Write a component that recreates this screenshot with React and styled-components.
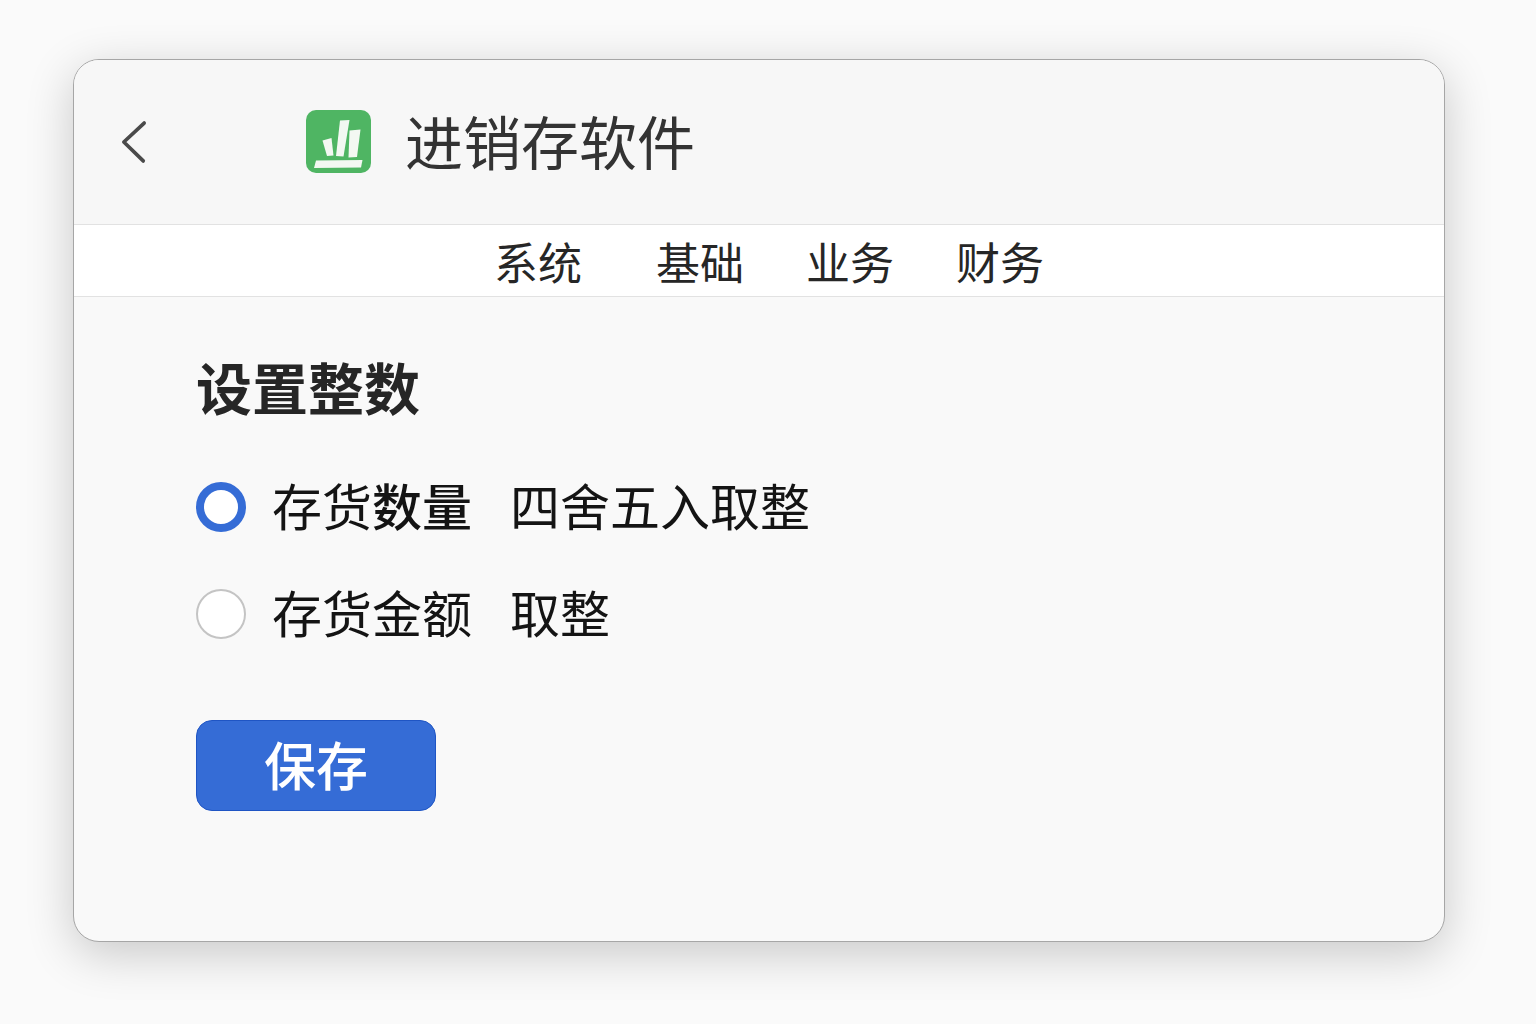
import React from 'react';
import styled, { createGlobalStyle } from 'styled-components';

const COLORS = {
  page: '#fafafa',
  card: '#f9f9f9',
  header: '#f7f7f7',
  white: '#ffffff',
  line: '#e2e2e2',
  edge: '#a6a6a6',
  ink: '#262626',
  title: '#333333',
  label: '#141414',
  primary: '#356cd6',
  primaryEdge: '#1f55c4',
  brand: '#4fb563',
};

const TABS = ['系统', '基础', '业务', '财务'];

const OPTIONS = [
  { id: 'quantity', subject: '存货', field: '数量', weight: 500, method: '四舍五入取整' },
  { id: 'amount', subject: '存货', field: '金额', weight: 400, method: '取整' },
];

const Logo = () => (
  <LogoImage viewBox="0 0 66 64" aria-hidden="true">
    <rect x="0" y="0" width="65" height="63" rx="10" fill={COLORS.brand} />
    <g fill="#f3f8f2">
      <path d="M16.5 30.5 L25.5 28 L27.5 45.5 L21 46 Z" />
      <path d="M34 10.5 L43.5 10 L37.5 46.5 L30 46 Z" />
      <path d="M43.5 20.5 L54.5 19.5 L51 47 L42.5 47.5 Z" />
      <path d="M10 50.5 L56.5 50 L55 57.5 L8 58 Z" />
    </g>
  </LogoImage>
);

const App = () => {
  const [selected, setSelected] = React.useState('quantity');

  return (
    <>
      <GlobalStyle />
      <Page>
        <Card>
          <Header>
            <BackButton type="button" aria-label="返回">
              <BackIcon viewBox="0 0 26 44" aria-hidden="true">
                <path d="M24 1.5 L2 22 L23 42.5" />
              </BackIcon>
            </BackButton>
            <Brand>
              <Logo />
              <Title>进销存软件</Title>
            </Brand>
          </Header>
          <Nav>
            {TABS.map((tab) => (
              <Tab key={tab} href="#">{tab}</Tab>
            ))}
          </Nav>
          <Form onSubmit={(event) => event.preventDefault()}>
            <Heading>设置整数</Heading>
            <Options>
              {OPTIONS.map(({ id, subject, field, weight, method }) => (
                <Option key={id} htmlFor={id}>
                  <Radio
                    type="radio"
                    id={id}
                    name="rounding"
                    checked={selected === id}
                    onChange={() => setSelected(id)}
                  />
                  <OptionText>
                    <span>
                      {subject}
                      <Field $weight={weight}>{field}</Field>
                    </span>
                    <span>{method}</span>
                  </OptionText>
                </Option>
              ))}
            </Options>
            <SaveButton type="submit">保存</SaveButton>
          </Form>
        </Card>
      </Page>
    </>
  );
};

const GlobalStyle = createGlobalStyle`
  *, *::before, *::after {
    box-sizing: border-box;
  }

  body {
    margin: 0;
    background: ${COLORS.page};
    color: ${COLORS.ink};
    font-family: 'Noto Sans CJK SC', sans-serif;
  }
`;

const Page = styled.div`
  display: flex;
  min-height: 100vh;
  padding: 59px 91px 82px 73px;
`;

const Card = styled.main`
  flex: 1;
  display: flex;
  flex-direction: column;
  overflow: hidden;
  background: ${COLORS.card};
  border: 1px solid ${COLORS.edge};
  border-radius: 26px;
  box-shadow: 0 12px 48px rgba(0, 0, 0, 0.2);
`;

const Header = styled.header`
  display: flex;
  align-items: center;
  gap: 152px;
  height: 164px;
  padding: 0 40px;
  background: ${COLORS.header};
`;

const BackButton = styled.button`
  display: flex;
  padding: 8px;
  border: none;
  background: none;
  cursor: pointer;
`;

const BackIcon = styled.svg`
  width: 24px;
  height: 44px;
  overflow: visible;
  fill: none;
  stroke: #4a4a4a;
  stroke-width: 4;
  stroke-linecap: round;
  stroke-linejoin: round;
`;

const Brand = styled.div`
  display: flex;
  align-items: center;
  gap: 33px;
`;

const LogoImage = styled.svg`
  width: 66px;
  height: 64px;
`;

const Title = styled.h1`
  margin: 0;
  padding-bottom: 4px;
  font-size: 58px;
  font-weight: 400;
  line-height: 64px;
  color: ${COLORS.title};
`;

const Nav = styled.nav`
  display: flex;
  justify-content: center;
  gap: 62px;
  padding: 4px 0 3px 20px;
  background: ${COLORS.white};
  border-top: 1px solid ${COLORS.line};
  border-bottom: 1px solid ${COLORS.line};
`;

const Tab = styled.a`
  font-size: 44px;
  line-height: 64px;
  color: ${COLORS.ink};
  text-decoration: none;

  &:first-child {
    margin-right: 12px;
  }
`;

const Form = styled.form`
  display: flex;
  flex-direction: column;
  align-items: flex-start;
  padding: 57px 122px;
`;

const Heading = styled.h2`
  margin: 0;
  font-size: 56px;
  font-weight: 700;
  line-height: 64px;
`;

const Options = styled.div`
  display: flex;
  flex-direction: column;
  gap: 43px;
  margin: 57px 0 74px;
`;

const Option = styled.label`
  display: flex;
  align-items: center;
  gap: 26px;
  font-size: 50px;
  line-height: 58px;
  color: ${COLORS.label};
  cursor: pointer;
`;

const OptionText = styled.span`
  display: flex;
  gap: 38px;
  padding-bottom: 6px;
`;

const Radio = styled.input`
  appearance: none;
  width: 50px;
  height: 50px;
  margin: 0;
  background: ${COLORS.white};
  border: 2px solid #c4c4c4;
  border-radius: 50%;

  &:checked {
    border: 8px solid ${COLORS.primary};
  }
`;

const Field = styled.span`
  font-weight: ${p => p.$weight};
`;

const SaveButton = styled.button`
  width: 240px;
  height: 91px;
  padding: 0 0 4px;
  border: 1px solid ${COLORS.primaryEdge};
  border-radius: 16px;
  background: ${COLORS.primary};
  color: ${COLORS.white};
  font-family: inherit;
  font-size: 52px;
  font-weight: 500;
  line-height: 64px;
  cursor: pointer;
`;

export default App;
